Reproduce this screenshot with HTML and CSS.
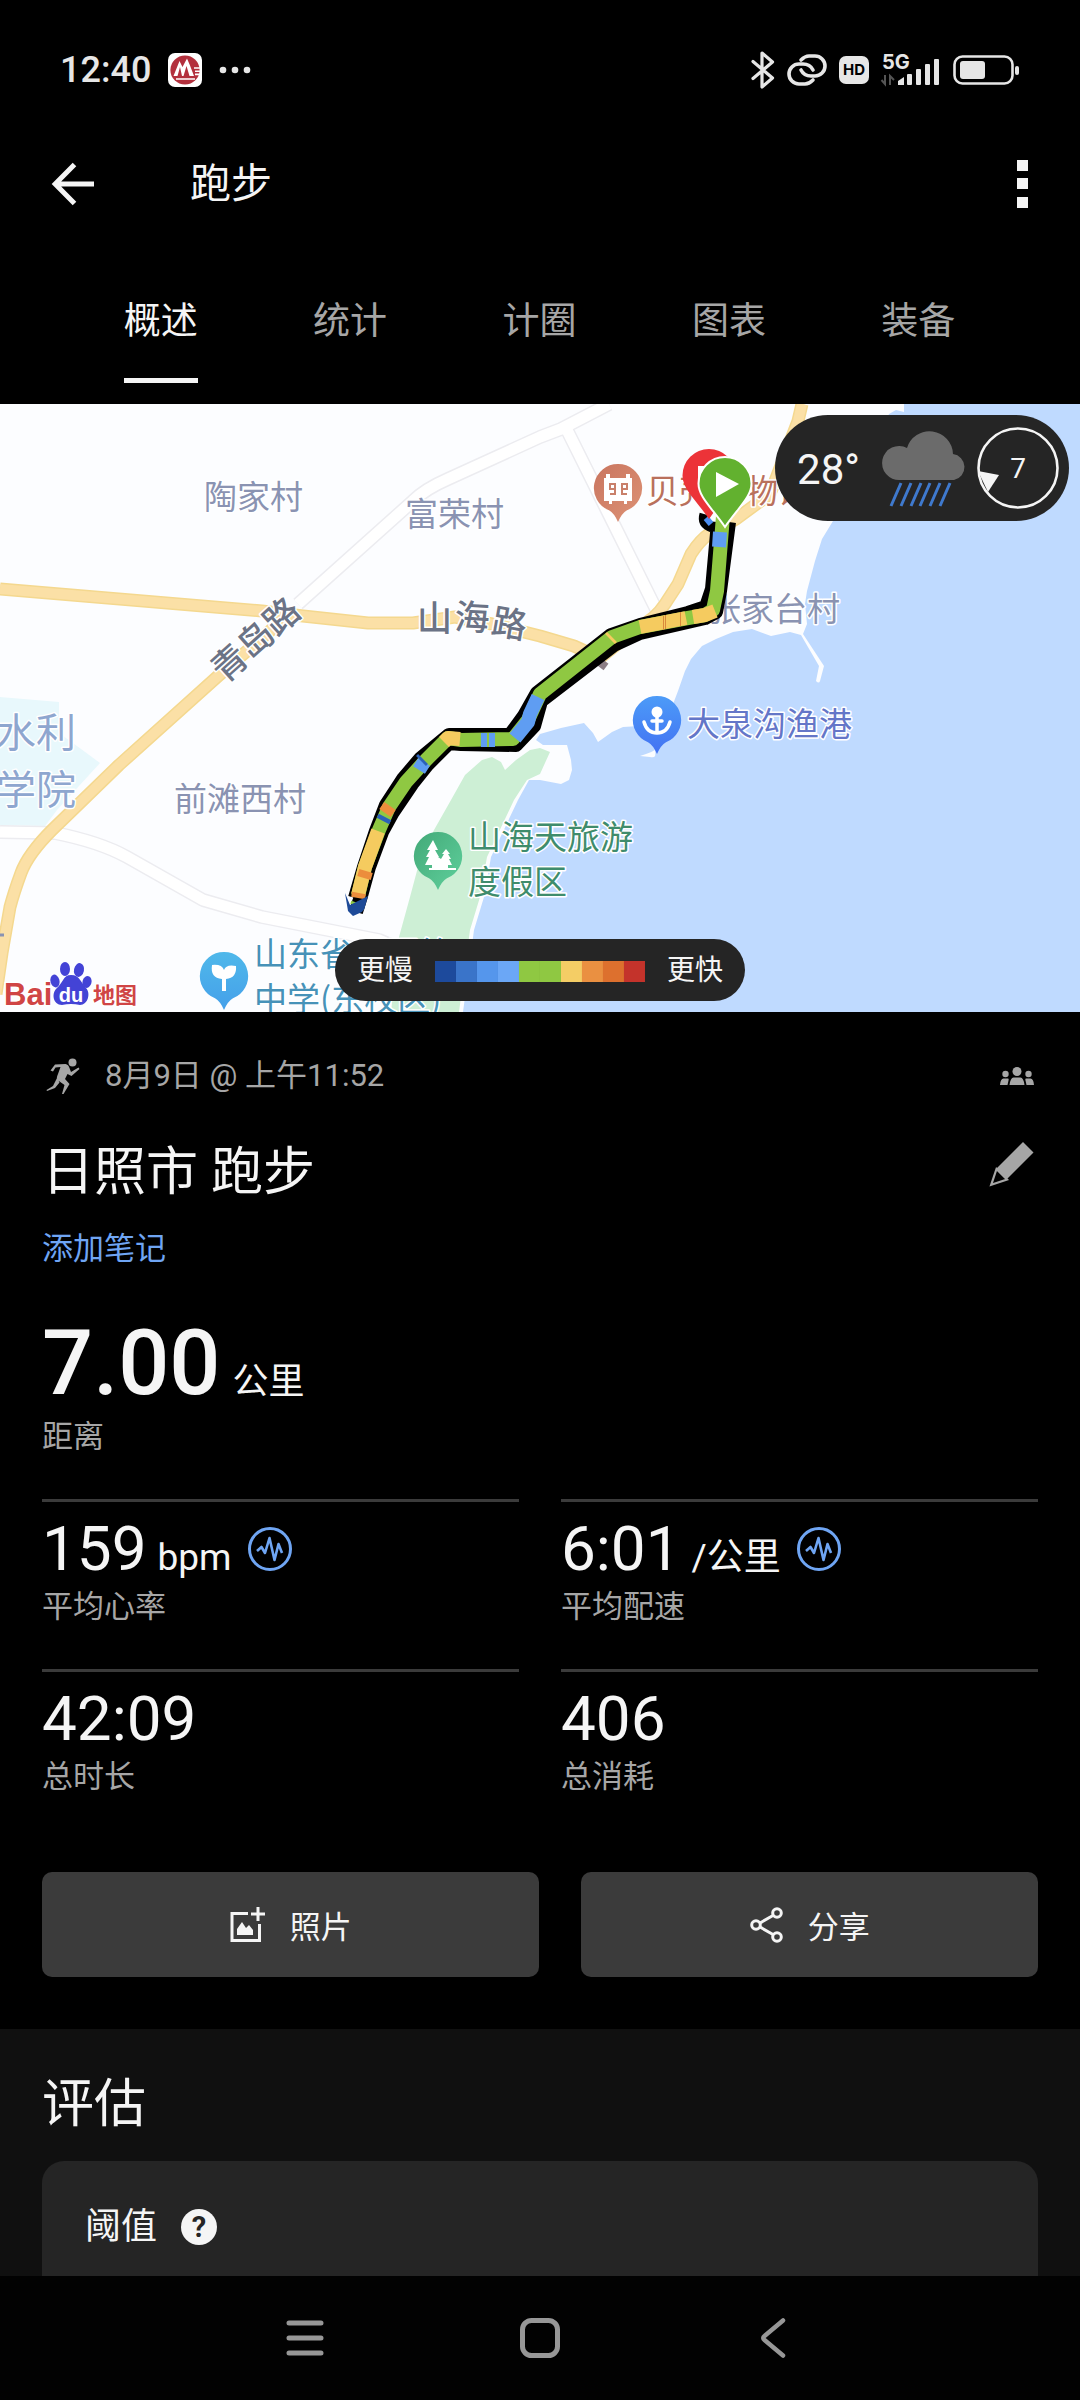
FILE: index.html
```html
<!DOCTYPE html>
<html lang="zh-CN">
<head>
<meta charset="utf-8">
<meta name="viewport" content="width=device-width, initial-scale=1">
<title>跑步</title>
<link rel="stylesheet" href="styles.css">
</head>
<body>
<div class="app">
  <div class="status">
    <div class="status-left">
      <span class="clock">12:40</span>
      <svg class="bank" width="34" height="34" viewBox="0 0 34 34"><rect width="34" height="34" rx="7" fill="#fff"/><circle cx="17" cy="17" r="14.6" fill="#b3303d"/><path d="M5.500 23 11.500 8l3 6L19 5.500l3 7L26 23h-4.500l-3-10-3 10h-1.500l-2-9-2.500 9z" fill="#fff"/><path d="M8 26h19M26 15h6.500M27 18.200h6M27 21.400h5" stroke="#fff" stroke-width="1.600"/></svg>
      <svg width="32" height="8" viewBox="0 0 32 8" fill="#e6e6e6"><circle cx="4" cy="4" r="3.300"/><circle cx="16" cy="4" r="3.300"/><circle cx="28" cy="4" r="3.300"/></svg>
    </div>
    <div class="status-right">
      <svg width="24" height="38" viewBox="0 0 24 38" fill="none" stroke="#e6e6e6" stroke-width="3.200" stroke-linejoin="round" stroke-linecap="round"><path d="M2 10.500 21.500 27 11 36V2l10.500 9L2 27.500"/></svg>
      <svg width="40" height="32" viewBox="0 0 40 32" fill="none" stroke="#e6e6e6" stroke-width="3.600" stroke-linecap="round"><path d="M14 6C17 3 19 2 22 2h6a10 10 0 0 1 0 20h-4c-5 0-8-2-10-6"/><path d="M26 26c-3 3-5 4-8 4h-6a10 10 0 0 1 0-20h4c5 0 8 2 10 6"/></svg>
      <svg width="30" height="28" viewBox="0 0 30 28"><rect width="30" height="28" rx="7" fill="#e6e6e6"/><text class="hd" x="15" y="19" text-anchor="middle">HD</text></svg>
      <svg width="60" height="34" viewBox="0 0 60 34"><text class="net" x="1" y="16">5G</text><g fill="#e6e6e6"><path d="M17 32v-4l6-4v8z"/><rect x="26" y="21" width="5" height="11" rx="1"/><rect x="35" y="16" width="5" height="16" rx="1"/><rect x="44" y="11" width="5" height="21" rx="1"/><rect x="53" y="6" width="5" height="26" rx="1"/></g><path d="M4 22v9l-3.500-4M9 32v-9l4 4" fill="none" stroke="#555" stroke-width="2"/></svg>
      <svg width="67" height="30" viewBox="0 0 67 30"><rect x="1.500" y="1.500" width="58" height="27" rx="8" fill="none" stroke="#e6e6e6" stroke-width="2.600"/><rect x="7" y="6" width="25" height="18" rx="3" fill="#e6e6e6"/><rect x="62" y="11" width="4" height="9" rx="2" fill="#e6e6e6"/></svg>
    </div>
  </div>

  <header class="bar">
    <button class="icon-btn" type="button" aria-label="返回"><svg width="42" height="42" viewBox="0 0 42 42" fill="none" stroke="#f5f5f5" stroke-width="5"><path d="M42 21H4M22.500 1.600 3.200 21l19.300 19.400"/></svg></button>
    <h1 class="bar-title">跑步</h1>
    <button class="icon-btn" type="button" aria-label="更多"><svg width="11" height="48" viewBox="0 0 11 48" fill="#f5f5f5"><path d="M0 0h11v11H0zM0 18h11v11H0zM0 37h11v11H0z"/></svg></button>
  </header>

  <nav class="tabs">
    <a class="tab active" href="#overview"><span>概述</span></a>
    <a class="tab" href="#stats"><span>统计</span></a>
    <a class="tab" href="#laps"><span>计圈</span></a>
    <a class="tab" href="#charts"><span>图表</span></a>
    <a class="tab" href="#gear"><span>装备</span></a>
  </nav>

  <div class="map">
    <svg class="map-art" viewBox="0 0 1080 608" preserveAspectRatio="xMidYMid slice">
      <defs>
        <linearGradient id="anchorFill" x2="0" y2="1"><stop stop-color="#4c9bf8"/><stop offset="1" stop-color="#4372f2"/></linearGradient>
        <linearGradient id="schoolFill" x2="0" y2="1"><stop stop-color="#4fb8ea"/><stop offset="1" stop-color="#45a0ea"/></linearGradient>
        <linearGradient id="parkFill" x1="0" x2="1" y2="1"><stop stop-color="#43a978"/><stop offset="1" stop-color="#5fd09c"/></linearGradient>
        <linearGradient id="museumFill" x1="0" x2="1" y2="1"><stop stop-color="#c9755f"/><stop offset="1" stop-color="#dd9275"/></linearGradient>
        <path id="poi" d="M0-24a24 24 0 0 1 9 46.300Q4 25 0 34q-4-9-9-11.700A24 24 0 0 1 0-24z"/>
        <path id="marker" d="M0-27a26.500 26.500 0 0 1 26.500 26.500C26.500 13 13 24 0 43-13 24-26.500 13-26.500-.500A26.500 26.500 0 0 1 0-27z"/>
      </defs>
      <rect width="1080" height="608" fill="#bfdaff"/>
      <path fill="#fcfdff" d="M0 0H904V8L896 6 889 10 870 50 833 117 822 135 815 157 807 187 805 200 807 220 803 230 824 262 820 277Q819 280 816 277L819 262 801 231 790 228 771 232 760 228 752 225 733 228 716 235 702 242 691 255 685 267 678 287 670 308 640 322 623 323 612 328 598 338 593 329 584 319 561 324 540 330 536 336 543 341 567 341 571 356 572 366 569 376 561 380 540 376 529 376 518 396 491 453 484 493 474 526 463 608H0z"/>
      <path fill="#fcfdff" d="M655 346q2 9-5 7l-10-1 6-2q6-2 9-4z"/>
      <path fill="#cdefd5" d="M391 608 399 533 410 493 418 463 434 426 451 396 465 371 482 356 492 353 501 358 505 366 516 356 530 346 540 344 550 348 540 370 527 376 514 396 487 453 480 493 470 526 459 608z"/>
      <path fill="#e8f8fc" d="M0 293 59 298V329L81 345 100 359 57 406 45 422 0 421z"/>
      <g fill="none" stroke-linejoin="round">
        <g stroke="#ececf0" stroke-width="14"><path d="M298 200 413 97Q425 85 448 75L540 33 561 25 609 0M565 22 656 205M0 428 55 429Q100 438 127 453L203 496 262 513 379 536 400 545"/></g>
        <g stroke="#fff" stroke-width="11"><path d="M298 200 413 97Q425 85 448 75L540 33 561 25 609 0M565 22 656 205M0 428 55 429Q100 438 127 453L203 496 262 513 379 536 400 545"/></g>
        <path stroke="#f4d88f" stroke-width="13" d="M0 185 262 207 303 212 368 219H413L455 213 492 220 540 232 574 242 600 254 640 222Q655 215 665 200L678 180 691 150Q700 136 709 130L736 115 770 90 798 17 802 0M286 213 217 273 119 361 52 426Q28 450 21 469T10 503L2 549-4 590"/>
        <path stroke="#fbe0a6" stroke-width="10" d="M0 185 262 207 303 212 368 219H413L455 213 492 220 540 232 574 242 600 254 640 222Q655 215 665 200L678 180 691 150Q700 136 709 130L736 115 770 90 798 17 802 0M286 213 217 273 119 361 52 426Q28 450 21 469T10 503L2 549-4 590"/>
      </g>
      <path d="M597 256 606 263" stroke="#8d7f86" stroke-width="8" fill="none"/>
      <g class="village">
        <text x="204" y="105">陶家村</text><text x="405" y="122">富荣村</text>
        <text x="174" y="407">前滩西村</text><text x="708" y="217">张家台村</text>
      </g>
      <g class="campus"><text x="-4" y="343">水利</text><text x="-4" y="400">学院</text></g>
      <text class="road" x="417 454 490" y="227 225 229" rotate="0 3 10">山海路</text>
      <text class="road" transform="translate(225 280) rotate(-42)">青岛路</text>
      <path d="M0 531h4" stroke="#8a93b2" stroke-width="3"/>
      <text class="poi-name museum" x="646" y="99">贝壳博物馆</text>
      <text class="poi-name port" x="687" y="332">大泉沟渔港</text>
      <text class="poi-name park" x="468" y="445">山海天旅游</text><text class="poi-name park" x="468" y="490">度假区</text>
      <text class="poi-name school" x="254" y="562">山东省日照第一</text><text class="poi-name school" x="254" y="607">中学(东校区)</text>
      <g transform="translate(618 84)"><use href="#poi" fill="url(#museumFill)"/><path fill="#fff" d="M-14-10h2v-4h4v4H8v-4h4v4h2v23H9v3H6v-3H-6v3h-3v-3h-5z"/><path d="M-3-4h-5v5h5zv10h-5M4-4h5v5H4zv10h5" fill="none" stroke="#c9806a" stroke-width="2"/></g>
      <g transform="translate(657 316)"><use href="#poi" fill="url(#anchorFill)"/><circle cy="-8" r="5.500" fill="#fff"/><path d="M0-5v18M-5 1H5M-13 2Q-10 13 0 13T13 2" fill="none" stroke="#fff" stroke-width="3.500" stroke-linecap="round"/></g>
      <g transform="translate(438 452)"><use href="#poi" fill="url(#parkFill)"/><path fill="#fff" d="M-5-16-11-6h3l-4 7h3l-4 8h7v3h-3v2h27v-2H10V9h4l-3-6h2l-3-5h2L8-7 4-2h2L3 3 0 1h1l-4-7h3z"/></g>
      <g transform="translate(224 572)"><use href="#poi" fill="url(#schoolFill)"/><path fill="#fff" d="M-12-11Q-2-12 0-6 2-12 12-10 13 2 2 3V15h-4V3Q-14 2-12-11z"/></g>

      <g fill="none" stroke-linejoin="round">
        <path stroke="#000" stroke-width="14" d="M729 118 720 187 716 208 705 214 640 229 614 241 541 297 534 322 516 341 461 340 449 339 428 360 412 380 393 408 382 428 369 463 361 492 356 508"/>
        <path stroke="#000" stroke-width="14" d="M718 118 712 185 706 203 688 209 640 221 611 231 537 289 524 312 510 331 449 331 420 355 403 375 386 401 376 427 364 463 355 494"/>
        <path stroke="#000" stroke-width="9" d="M704 110q-3 10 8 14"/><path stroke="#4b8df0" stroke-width="6" d="M706 114l5 6"/>
        <g stroke-width="14">
          <path stroke="#8fc842" d="M723 112 717 187 713 206 705 211 688 214 640 223 612 233 540 290 528 316 513 335 461 336 448 334 426 356 406 378 389 403 379 426 365 463 358 492"/>
          <path stroke="#5f9df2" d="M720 128 719 143M538 293 530 310 528 318 515 334M495 336h-14M424 358l-5 8"/>
          <path stroke="#f5cb5f" d="M715 207 705 211 693 213M686 214 640 223M612 233 610 235M460 335 448 334 444 338M378 427 365 463 358 491"/>
          <path stroke="#ec8d3c" d="M390 402 385 409M366 467 364 474M359 489 358 494"/>
          <path stroke="#d98a3c" d="M680 215h1M665 218h1M663 219h1"/>
          <path stroke="#8fc842" d="M487 336h2"/>
          <path stroke="#2c62b8" d="M423 355 421 357M385 413 383 417"/>
          <path stroke="#8fc842" d="M358 499 357 502"/>
        </g>
      </g>
      <path fill="#1d4a98" d="M345 489 350 501 364 505 362 508 353 512 348 507zM350 501 368 492 364 506z"/>
      <g transform="translate(709 72)"><use href="#marker" fill="#ec3338"/><path fill="#fff" d="M-11-10h9v12h-9z"/></g>
      <g transform="translate(725 80)"><use href="#marker" fill="#62b12f" stroke="#fff" stroke-width="2"/><path fill="#fff" d="M-9-12 14 0-9 13z"/></g>

      <g class="baidu"><text x="4" y="601">Bai</text><text class="baidu-cn" x="93" y="599">地图</text></g>
      <g fill="#4343d6"><path d="M71 571c9 0 10 8 15 13s2 17-6 17q-9-2-18 0c-9 0-11-12-5-17s6-13 14-13z"/><ellipse cx="65" cy="565" rx="5" ry="7"/><ellipse cx="79" cy="566" rx="5" ry="7" transform="rotate(12 79 566)"/><ellipse cx="55" cy="577" rx="4.500" ry="6.500" transform="rotate(-15 55 577)"/><ellipse cx="87" cy="578" rx="4.500" ry="6" transform="rotate(15 87 578)"/></g>
      <text class="du" x="71" y="598" text-anchor="middle">du</text>
    </svg>

    <div class="weather">
      <span class="temp">28°</span>
      <svg width="86" height="76" viewBox="0 0 86 76"><path fill="#6b6b6b" d="M18 50A17 17 0 1 1 25 18 23.500 23.500 0 0 1 71 24 13.200 13.200 0 0 1 72 50z"/><path d="M19 53 9 76M29 53 19 76M39 53 29 76M48 53 38 76M58 53 48 76M68 53 58 76" stroke="#3f79cd" stroke-width="3"/></svg>
      <svg class="wind" width="82" height="82" viewBox="0 0 82 82"><circle cx="41" cy="41" r="39.500" fill="none" stroke="#f5f5f5" stroke-width="2.600"/><path fill="#f5f5f5" d="M1 44 22 48 11 65z"/><text x="41" y="51" text-anchor="middle">7</text></svg>
    </div>

    <div class="legend">
      <span>更慢</span>
      <div class="scale"><i class="c1"></i><i class="c2"></i><i class="c3"></i><i class="c4"></i><i class="c5"></i><i class="c5"></i><i class="c6"></i><i class="c7"></i><i class="c8"></i><i class="c9"></i></div>
      <span>更快</span>
    </div>
  </div>

  <main class="summary" id="overview">
    <div class="meta">
      <svg class="runner" width="34" height="36" viewBox="0 0 34 36"><circle cx="26.500" cy="4.500" r="4" fill="#a6a6a6"/><path fill="#a6a6a6" d="M9 6.500 19.500 6q3 .500 4 4l1.500 4 7.500-4.500 1 1.500-8 7-4-2-2.500 5 4.500 5-6 10h-1.500l2.500-9-7-5q-1.500-2 .500-6l2.500-7-5 .500-2.500 4-2.500-1zM11 20l2.500 4.500L9 30 1 33l-.500-1 6.500-4z"/></svg>
      <span class="date">8月9日 @ 上午11:52</span>
      <svg width="34" height="18" viewBox="0 0 34 18" fill="#a6a6a6"><circle cx="17" cy="4.500" r="4.500"/><circle cx="5.500" cy="7" r="3.200"/><circle cx="28.500" cy="7" r="3.200"/><path d="M9.500 18q1-7.500 4-7.500h7q3 0 4 7.500zM0 18q.500-6.500 3.500-6.500h4.500q1 0 .500 2L7.500 18zM34 18q-.500-6.500-3.500-6.500H26q-1 0-.500 2l1 4.500z"/></svg>
    </div>
    <div class="title-row">
      <h2 class="title">日照市 跑步</h2>
      <button class="icon-btn edit" type="button" aria-label="编辑"><svg width="44" height="44" viewBox="0 0 44 44"><path fill="#a6a6a6" d="M33 0 43.500 10.500 17 37 6.500 26.500z"/><path d="M6.500 27 1.200 42.800 17 37.500z" fill="none" stroke="#a6a6a6" stroke-width="2.200"/></svg></button>
    </div>
    <a class="note" href="#note">添加笔记</a>
    <div class="hero"><b>7.00</b><span>公里</span></div>
    <div class="label hero-label">距离</div>

    <div class="grid">
      <div class="cell">
        <div class="value">159<small>bpm</small><svg width="44" height="44" viewBox="0 0 44 44" fill="none" stroke="#6fa5f3"><circle cx="22" cy="22" r="20.500" stroke-width="3"/><path stroke-width="2.600" stroke-linejoin="round" d="M9 24 13.500 20 17 26 21.500 11 26.500 33 30.500 17 34 26"/></svg></div>
        <div class="label">平均心率</div>
      </div>
      <div class="cell">
        <div class="value">6:01<small class="wide">/公里</small><svg width="44" height="44" viewBox="0 0 44 44" fill="none" stroke="#6fa5f3"><circle cx="22" cy="22" r="20.500" stroke-width="3"/><path stroke-width="2.600" stroke-linejoin="round" d="M9 24 13.500 20 17 26 21.500 11 26.500 33 30.500 17 34 26"/></svg></div>
        <div class="label">平均配速</div>
      </div>
      <div class="cell"><div class="value">42:09</div><div class="label">总时长</div></div>
      <div class="cell"><div class="value">406</div><div class="label">总消耗</div></div>
    </div>

    <div class="actions">
      <button class="action photo" type="button"><svg width="36" height="36" viewBox="0 0 36 36" fill="none" stroke="#f5f5f5" stroke-width="3"><path d="M18 6.500H2V33.500H29.500V17M28 0v14M21 7h14"/><path fill="#f5f5f5" stroke="none" d="M7 28v-6l5-7 4 6 3-3 4 5v5z"/></svg>照片</button>
      <button class="action share" type="button"><svg width="34" height="36" viewBox="0 0 34 36" fill="none" stroke="#f5f5f5" stroke-width="3"><circle cx="6" cy="18" r="4.300"/><circle cx="27" cy="6" r="4.300"/><circle cx="27" cy="30" r="4.300"/><path d="M10 16 23 8.500M10 20 23 27.500"/></svg>分享</button>
    </div>
  </main>

  <section class="assess">
    <h2 class="title">评估</h2>
    <div class="card">
      <h3>阈值</h3>
      <button class="help" type="button" aria-label="帮助">?</button>
    </div>
  </section>

  <nav class="sysnav">
    <button class="icon-btn" type="button" aria-label="最近任务"><svg width="40" height="40" viewBox="0 0 40 40" stroke="#979797" stroke-width="5" stroke-linecap="round"><path d="M3 5h32M3 20h32M3 35h32"/></svg></button>
    <button class="icon-btn" type="button" aria-label="主屏幕"><svg width="40" height="40" viewBox="0 0 40 40" fill="none" stroke="#979797" stroke-width="5"><rect x="2.500" y="2.500" width="35" height="35" rx="9"/></svg></button>
    <button class="icon-btn" type="button" aria-label="后退"><svg width="40" height="40" viewBox="0 0 40 40" fill="none" stroke="#979797" stroke-width="4.500" stroke-linecap="round" stroke-linejoin="round"><path d="M29 2.500 10.500 18q-2.500 2 0 4L29 37.500"/></svg></button>
  </nav>
</div>
</body>
</html>
```
FILE: styles.css
```css
* { box-sizing: border-box; }
body {
  margin: 0;
  background: #000;
  color: #f5f5f5;
  font-family: Roboto, "Noto Sans CJK SC", sans-serif;
}
h1, h2, h3 { margin: 0; font-weight: 400; }
svg { display: block; flex: none; overflow: visible; }
button { font: inherit; color: inherit; border: 0; cursor: pointer; }
.icon-btn { display: flex; padding: 0; background: none; }
.app { display: flex; flex-direction: column; min-height: 100vh; }

/* status bar */
.status {
  display: flex;
  justify-content: space-between;
  align-items: center;
  height: 48px;
  margin-top: 46px;
  padding: 0 60px;
}
.status-left, .status-right { display: flex; align-items: center; }
.status-left { gap: 17px; }
.status-right { gap: 12px; }
.clock { color: #e6e6e6; font-size: 36px; line-height: 48px; font-weight: 500; }
.hd { font: 700 15px Inter, sans-serif; fill: #000; }
.net { font: 700 20px Inter, sans-serif; fill: #e6e6e6; }

/* app bar */
.bar { display: flex; align-items: center; height: 180px; padding: 0 52px; }
.bar-title { flex: 1; margin-left: 96px; font-size: 41px; line-height: 50px; }

/* tabs */
.tabs { display: flex; padding: 24px 67px 21px 66px; }
.tab { flex: 1; text-align: center; color: #a6a6a6; font-size: 37px; line-height: 48px; text-decoration: none; }
.tab span { display: inline-block; padding-bottom: 32px; border-bottom: 5px solid transparent; }
.tab.active { color: #f5f5f5; }
.tab.active span { border-color: #f5f5f5; }

/* map */
.map { position: relative; }
.map-art { width: 100%; height: auto; overflow: hidden; font-family: "Noto Sans CJK SC", sans-serif; }
.map-art text { paint-order: stroke; stroke: #fff; stroke-width: 3px; stroke-linejoin: round; }
.village { font-size: 33px; fill: #8a93b2; }
.campus { font-size: 40px; fill: #8ea6cf; }
.road { font-size: 35px; font-weight: 500; fill: #6b7386; }
.poi-name { font-size: 33px; }
.museum { fill: #b9705c; }
.port { fill: #6476c8; }
.park { fill: #3f8c6c; }
.school { fill: #4792b8; }
.baidu { font-family: "Liberation Sans", sans-serif; font-size: 31px; font-weight: 700; fill: #d04545; }
.baidu-cn { font-family: "Noto Sans CJK SC", sans-serif; font-size: 22px; }
.map-art .du { font: 700 20px "Liberation Sans", sans-serif; fill: #fff; stroke: none; }
.weather {
  position: absolute;
  top: 11px;
  right: 11px;
  display: flex;
  align-items: center;
  height: 106px;
  padding: 0 10px 0 22px;
  border-radius: 53px;
  background: #252525;
}
.temp { margin-right: 22px; font-size: 42px; line-height: 48px; padding-top: 3px; }
.wind { margin-left: 9px; }
.map .wind text { font: 28px Roboto, sans-serif; fill: #f5f5f5; }
.legend {
  position: absolute;
  bottom: 11px;
  left: 50%;
  transform: translateX(-50%);
  display: flex;
  align-items: center;
  gap: 22px;
  height: 62px;
  padding: 2px 22px 0;
  border-radius: 31px;
  background: #252525;
  font-size: 28px;
  line-height: 40px;
  white-space: nowrap;
}
.scale { display: flex; }
.scale i { width: 21px; height: 21px; }
.c1 { background: #1d4a9c; }
.c2 { background: #3a74c9; }
.c3 { background: #5596ec; }
.c4 { background: #6ba7f6; }
.c5 { background: #8fc842; }
.c6 { background: #f4cd65; }
.c7 { background: #ea9041; }
.c8 { background: #dd702e; }
.c9 { background: #c4332b; }

/* activity summary */
.summary { padding: 40px 42px 52px; }
.meta { display: flex; align-items: center; height: 48px; padding: 0 4px; }
.date { flex: 1; margin-left: 25px; font-size: 31px; line-height: 48px; color: #a6a6a6; }
.title-row { display: flex; justify-content: space-between; align-items: center; margin-top: 41px; padding-right: 4px; }
.title { font-size: 52px; line-height: 64px; }
.edit { margin-bottom: 18px; }
.note { display: block; width: fit-content; margin-top: 24px; font-size: 31px; line-height: 40px; color: #6fa5f3; text-decoration: none; }
.hero { display: flex; align-items: baseline; gap: 12px; height: 96px; margin-top: 47px; font-size: 36px; line-height: 40px; }
.hero b { font-size: 90px; line-height: 96px; font-weight: 500; }
.label { font-size: 31px; line-height: 40px; color: #a6a6a6; }
.hero-label { margin-top: 5px; }
.grid { display: grid; grid-template-columns: 1fr 1fr; gap: 42px; margin-top: 42px; }
.cell { border-top: 3px solid #3b3b3b; padding-top: 15px; }
.value { display: flex; align-items: baseline; height: 64px; margin-bottom: 6px; font-size: 62px; line-height: 64px; }
.value small { margin-left: 11px; font-size: 37px; line-height: 40px; }
.value svg { align-self: center; margin-left: 16px; }
.actions { display: flex; gap: 42px; margin-top: 75px; }
.action {
  display: flex;
  align-items: center;
  justify-content: center;
  gap: 24px;
  height: 105px;
  border-radius: 10px;
  background: #3b3b3b;
  font-size: 31px;
}
.photo { flex: 498; }
.share { flex: 456; }

/* assessment */
.assess { flex: 1; display: flex; flex-direction: column; padding: 44px 42px 0; background: #101010; }
.card { flex: 1; display: flex; align-items: flex-start; gap: 24px; margin-top: 24px; padding: 42px 43px 24px; border-radius: 22px 22px 0 0; background: #252525; }
.card h3 { font-size: 36px; line-height: 48px; }
.help { width: 36px; height: 36px; margin-top: 6px; padding: 0; border-radius: 50%; background: #f5f5f5; color: #252525; font-size: 29px; line-height: 36px; font-weight: 700; text-align: center; }

/* system navigation */
.sysnav { display: flex; justify-content: center; align-items: center; gap: 194px; height: 124px; background: #020202; }
```
